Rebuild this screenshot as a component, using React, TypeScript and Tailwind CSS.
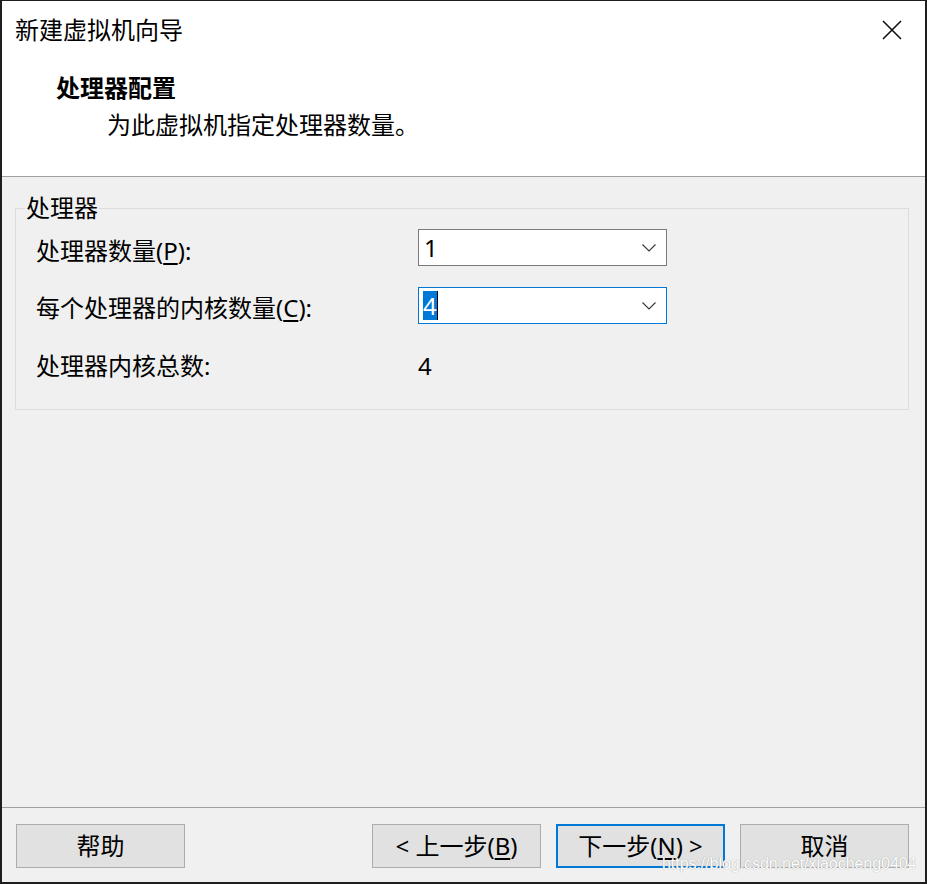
import React from "react";

const font = "font-['Noto_Sans','Noto_Sans_CJK_SC',sans-serif]";

function Chevron() {
  return (
    <svg width="14" height="8" viewBox="0 0 14 8" className="shrink-0">
      <path d="M0.5 0.5 L7 7 L13.5 0.5" fill="none" stroke="#3c3c3c" strokeWidth="1.2" />
    </svg>
  );
}

function Btn({ children, primary }: { children: React.ReactNode; primary?: boolean }) {
  return (
    <div
      className={
        primary
          ? "w-[169px] h-[44px] flex items-center justify-center bg-[#e1e1e1] border-2 border-[#0078d7] text-[24px] leading-[24px] text-black"
          : "w-[169px] h-[44px] flex items-center justify-center bg-[#e1e1e1] border border-[#adadad] text-[24px] leading-[24px] text-black"
      }
    >
      {children}
    </div>
  );
}

export default function App() {
  return (
    <div className={`w-[927px] h-[884px] bg-[#1e1e1e] pl-[2px] pt-[1px] pr-[2px] pb-[2px] ${font}`}>
      <div className="relative w-full h-full flex flex-col bg-[#f0f0f0] text-black">
        {/* header */}
        <div className="h-[176px] shrink-0 bg-white border-b border-[#a0a0a0] flex flex-col">
          <div className="h-[58px] flex items-center justify-between pl-[13px] pr-[23px]">
            <span className="text-[24px] leading-[24px]">新建虚拟机向导</span>
            <svg width="20" height="20" viewBox="0 0 20 20">
              <path d="M1 1 L19 19 M19 1 L1 19" stroke="#111" strokeWidth="1.6" fill="none" />
            </svg>
          </div>
          <div className="mt-[17px] pl-[54px] text-[24px] leading-[24px] font-bold">处理器配置</div>
          <div className="mt-[13px] pl-[105px] text-[24px] leading-[24px]">为此虚拟机指定处理器数量。</div>
        </div>

        {/* body */}
        <div className="flex-1 flex flex-col">
          <div className="relative mt-[31px] ml-[13px] w-[894px] h-[202px] border border-[#dcdcdc] pt-[20px] pl-[20px]">
            <span className="absolute left-[9px] top-[-13px] px-[1px] bg-[#f0f0f0] text-[24px] leading-[24px]">处理器</span>

            <div className="flex items-start h-[37px]">
              <span className="w-[382px] pt-[10px] text-[24px] leading-[24px]">
                处理器数量(<span className="underline underline-offset-[3px]">P</span>):
              </span>
              <div className="w-[249px] h-[37px] bg-white border border-[#7a7a7a] flex items-center justify-between pl-[5px] pr-[10px]">
                <span className="text-[24px] leading-[24px]">1</span>
                <Chevron />
              </div>
            </div>

            <div className="flex items-start h-[37px] mt-[21px]">
              <span className="w-[382px] pt-[9px] text-[24px] leading-[24px]">
                每个处理器的内核数量(<span className="underline underline-offset-[3px]">C</span>):
              </span>
              <div className="w-[249px] h-[37px] bg-white border border-[#0078d7] flex items-center justify-between pl-[4px] pr-[10px]">
                <span className="flex items-center">
                  <span className="h-[29px] flex items-center bg-[#0078d7] text-white text-[24px] leading-[24px]">4</span>
                  <span className="w-[1px] h-[29px] bg-black" />
                </span>
                <Chevron />
              </div>
            </div>

            <div className="flex items-start mt-[30px]">
              <span className="w-[382px] text-[24px] leading-[24px]">处理器内核总数:</span>
              <span className="text-[24px] leading-[24px]">4</span>
            </div>
          </div>
          <div className="flex-1" />
        </div>

        {/* footer */}
        <div className="h-[75px] shrink-0 border-t border-[#a0a0a0] flex items-start justify-between pt-[16px] pl-[14px] pr-[16px]">
          <Btn>帮助</Btn>
          <div className="flex gap-[15px]">
            <Btn>
              &lt; 上一步(<span className="underline underline-offset-[3px]">B</span>)
            </Btn>
            <Btn primary>
              下一步(<span className="underline underline-offset-[3px]">N</span>) &gt;
            </Btn>
            <Btn>取消</Btn>
          </div>
        </div>

        <span className="absolute left-[660px] top-[855px] font-['Liberation_Sans',sans-serif] text-[16px] leading-[16px] tracking-[-0.05px] text-white [text-shadow:0_0_1px_#8a8a8a]">
          https://blog.csdn.net/xiaocheng0404
        </span>
      </div>
    </div>
  );
}
